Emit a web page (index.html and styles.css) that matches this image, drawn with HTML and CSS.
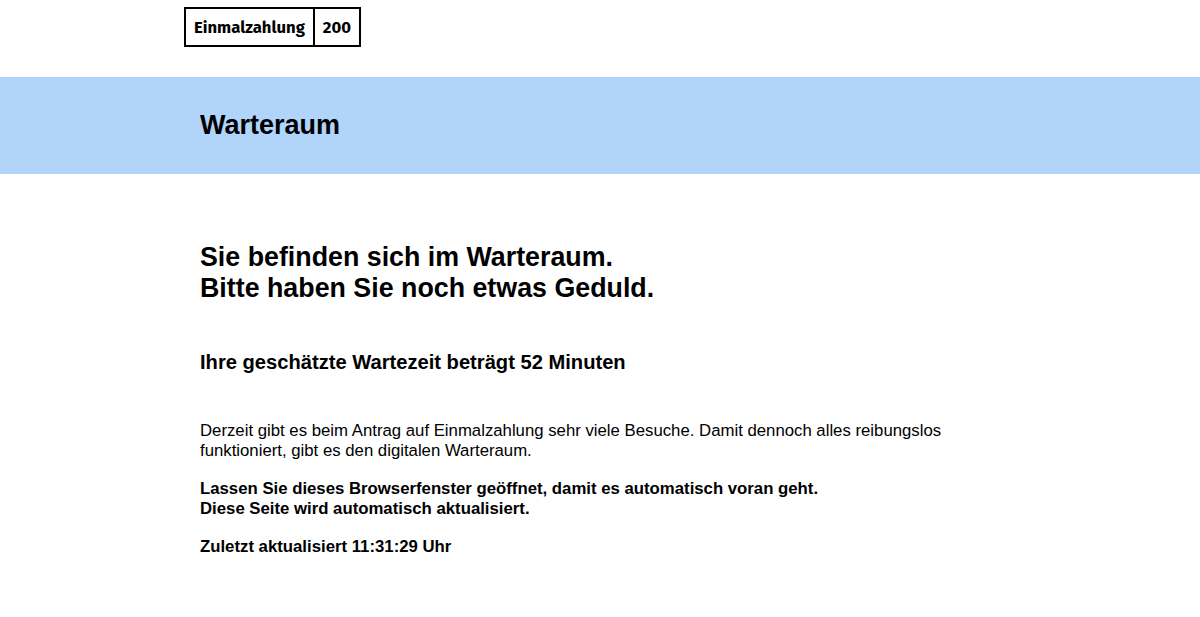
FILE: index.html
```html
<!DOCTYPE html>
<html lang="de">
<head>
<meta charset="utf-8">
<title>Warteraum</title>
<link rel="stylesheet" href="styles.css">
</head>
<body>
<div class="top">
  <table class="info">
    <tr><th>Einmalzahlung</th><td>200</td></tr>
  </table>
</div>
<header class="band">
  <div class="wrap">
    <h1 class="band-title">Warteraum</h1>
  </div>
</header>
<main class="wrap main">
  <h2 class="lead">Sie befinden sich im Warteraum.<br>Bitte haben Sie noch etwas Geduld.</h2>
  <h3 class="wait">Ihre geschätzte Wartezeit beträgt 52 Minuten</h3>
  <p class="text">Derzeit gibt es beim Antrag auf Einmalzahlung sehr viele Besuche. Damit dennoch alles reibungslos funktioniert, gibt es den digitalen Warteraum.</p>
  <p class="text strong">Lassen Sie dieses Browserfenster geöffnet, damit es automatisch voran geht.<br>Diese Seite wird automatisch aktualisiert.</p>
  <p class="text strong">Zuletzt aktualisiert 11:31:29 Uhr</p>
</main>
</body>
</html>
```
FILE: styles.css
```css
html, body {
  margin: 0;
  padding: 0;
  background: #fff;
  color: #000;
  font-family: "Liberation Sans", Arial, Helvetica, sans-serif;
}

.top {
  max-width: 832px;
  margin: 0 auto;
  padding-top: 7px;
}

.info {
  border-collapse: collapse;
  border: 2px solid #000;
  font-family: "Fira Sans", "Open Sans", Roboto, sans-serif;
  font-weight: 700;
  font-size: 16.7px;
}

.info th, .info td {
  border: 2px solid #000;
  padding: 0 8px;
  height: 36px;
  font-weight: 700;
  text-align: left;
}

.band {
  margin-top: 30px;
  background: #b0d4fa;
  height: 97px;
  display: flex;
  align-items: center;
}

.wrap {
  width: 100%;
  max-width: 832px;
  margin: 0 auto;
  padding: 0 16px;
  box-sizing: border-box;
}

.band-title {
  margin: 0 0 1px;
  font-size: 27px;
  line-height: 32px;
  font-weight: 700;
}

.main {
  padding-top: 68px;
  padding-bottom: 40px;
}

.lead {
  margin: 0 0 46px;
  font-size: 26.8px;
  line-height: 31px;
  font-weight: 700;
}

.wait {
  margin: 0 0 47px;
  font-size: 20.15px;
  line-height: 24px;
  font-weight: 700;
}

.text {
  margin: 0 0 18px;
  font-size: 16.75px;
  line-height: 20px;
}

.strong {
  font-weight: 700;
}
```
